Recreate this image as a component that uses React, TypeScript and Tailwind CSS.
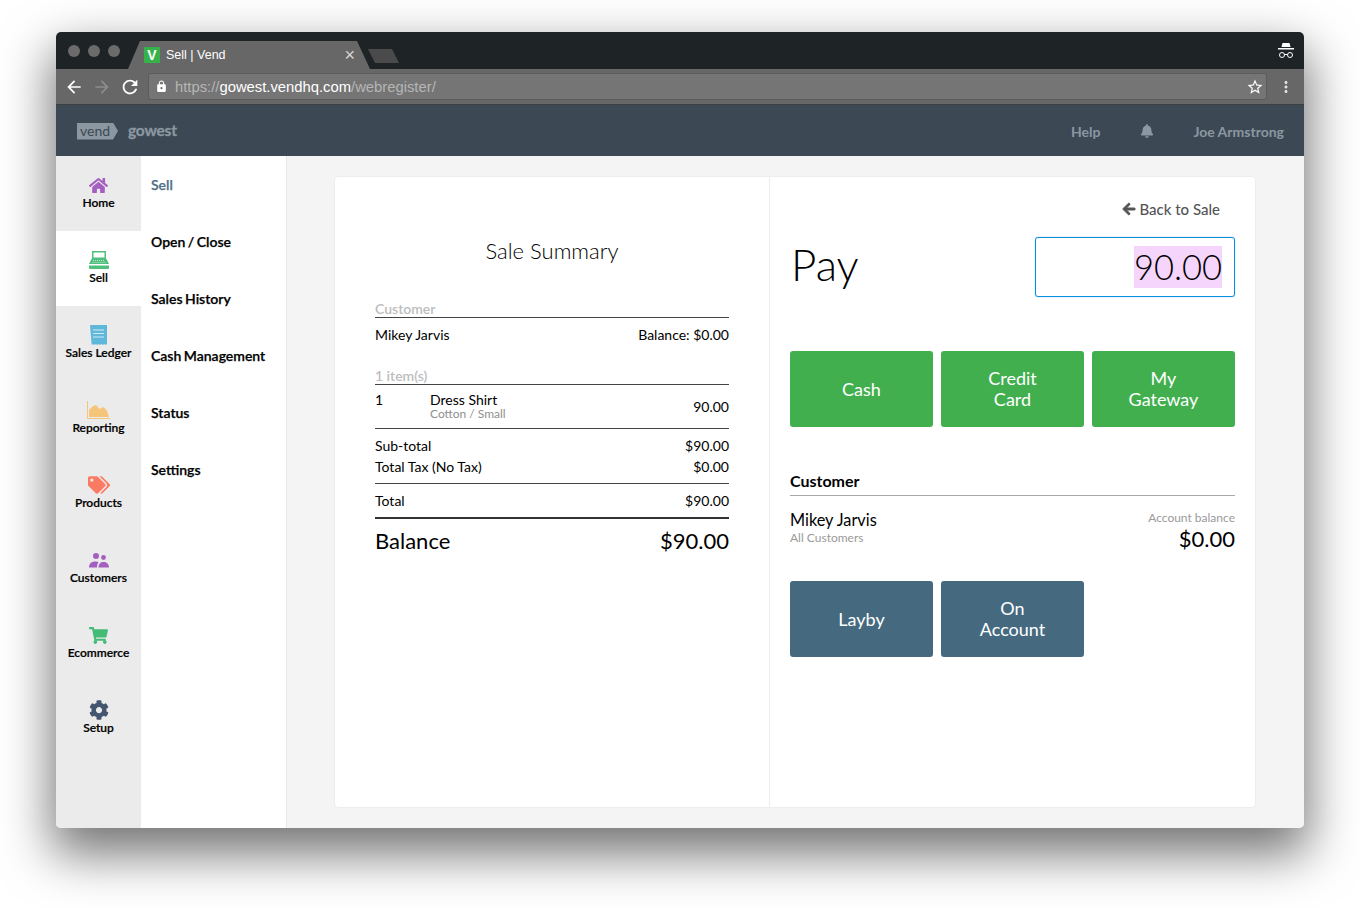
import { FaArrowLeft, FaBell, FaCog, FaHome, FaShoppingCart, FaTags } from "react-icons/fa";
import { MdArrowBack, MdArrowForward, MdLock, MdMoreVert, MdRefresh, MdStarBorder } from "react-icons/md";
import type { ReactNode } from "react";

function RegisterIcon() {
  return (
    <svg width="20" height="18" viewBox="0 0 20 18" fill="#4fbf7d">
      <path d="M3 0h14v8H3z M4.500 1.500v5h11v-5z" fillRule="evenodd" />
      <path d="M2.500 8h15L20 13H0z" />
      <path d="M4 9.500h12M3.500 11.500h13" stroke="#d5f0e0" strokeWidth="0.800" strokeDasharray="1 1" />
      <path d="M0 14.500h20V17a1 1 0 0 1-1 1H1a1 1 0 0 1-1-1z" />
    </svg>
  );
}

function ReceiptIcon() {
  return (
    <svg width="17" height="20" viewBox="0 0 17 20">
      <path d="M0 0h17v19l-1.400 1-1.400-1-1.400 1-1.400-1-1.400 1-1.400-1-1.400 1-1.400-1-1.400 1-1.400-1-1.300 1z" fill="#5fb8da" />
      <path d="M3 5h11M3 8.500h11M3 12h11" stroke="#cfeaf4" strokeWidth="1.200" />
    </svg>
  );
}

function ChartIcon() {
  return (
    <svg width="23" height="18" viewBox="0 0 23 18" fill="#f5c57a">
      <path d="M0 0h1v17h22v1H0z" />
      <path d="M2 16V9l4-4 3-1 3.500 4 4-2 3.500 3.500 2 6.500z" />
    </svg>
  );
}

function PeopleIcon() {
  return (
    <svg width="20" height="15" viewBox="0 0 20 15" fill="#a45fc0">
      <circle cx="7" cy="3" r="3" />
      <circle cx="14.500" cy="4.500" r="2.400" />
      <path d="M0 14.500c0-4 2.500-6 6.500-6 1.200 0 2.400.3 3 .7-1 1.300-1.500 3-1.500 5.300z" />
      <path d="M9.500 14.500c0-3.500 2-5.500 5-5.500s5.500 2 5.500 5.500z" />
    </svg>
  );
}

function IncognitoIcon() {
  return (
    <svg width="16" height="16" viewBox="0 0 16 16" fill="white">
      <path d="M4.500 0h7l1 4h-9z" />
      <path d="M0 5h16v1.400H0z" />
      <circle cx="4" cy="12" r="2.500" fill="none" stroke="white" strokeWidth="1" />
      <circle cx="12" cy="12" r="2.500" fill="none" stroke="white" strokeWidth="1" />
      <path d="M6.500 11.500h3" stroke="white" strokeWidth="1" />
    </svg>
  );
}

const railItems: { label: string; icon: ReactNode; active?: boolean }[] = [
  { label: "Home", icon: <FaHome className="size-[19px] text-[#a45fc0]" /> },
  { label: "Sell", icon: <RegisterIcon />, active: true },
  { label: "Sales Ledger", icon: <ReceiptIcon /> },
  { label: "Reporting", icon: <ChartIcon /> },
  { label: "Products", icon: <FaTags className="size-[22px] text-[#fb7a63]" /> },
  { label: "Customers", icon: <PeopleIcon /> },
  { label: "Ecommerce", icon: <FaShoppingCart className="size-[19px] text-[#45bb78]" /> },
  { label: "Setup", icon: <FaCog className="size-[20px] text-[#44566f]" /> },
];

const subItems = ["Sell", "Open / Close", "Sales History", "Cash Management", "Status", "Settings"];

function PayButton({ children, blue }: { children: ReactNode; blue?: boolean }) {
  return (
    <button
      type="button"
      className={`h-[76px] w-[143px] rounded-[3px] px-8 text-[18px] leading-[21px] text-white ${blue ? "bg-[#456a80]" : "bg-[#42af4f]"}`}
    >
      {children}
    </button>
  );
}

function SummaryRow({ left, right, className = "" }: { left: string; right: string; className?: string }) {
  return (
    <div className={`flex justify-between text-[14px] leading-[21px] text-black ${className}`}>
      <span>{left}</span>
      <span>{right}</span>
    </div>
  );
}

export default function App() {
  return (
    <div className="min-h-[908px] overflow-hidden bg-white pl-[56px] pt-[32px] font-['Lato',sans-serif]">
      <div className="h-[796px] w-[1248px] overflow-hidden rounded-[5px] shadow-[0_22px_50px_4px_rgba(0,0,0,0.55)]">
        {/* Browser tab strip */}
        <div className="flex h-[37px] items-end bg-[#1e2326] pl-[12px] pr-[10px]">
          <div className="flex h-[37px] items-center gap-2 self-start">
            <span className="size-[12px] rounded-full bg-[#6b6b6b]" />
            <span className="size-[12px] rounded-full bg-[#6b6b6b]" />
            <span className="size-[12px] rounded-full bg-[#6b6b6b]" />
          </div>
          <div className="ml-[8px] flex h-[28px] w-[242px] items-center bg-[#676767] pl-[16px] pr-[15px] [clip-path:polygon(12px_0,229px_0,242px_100%,0_100%)] font-['Liberation_Sans',sans-serif]">
            <span className="flex size-[16px] items-center justify-center rounded-[1px] bg-[#35b34a] text-[14px] font-bold text-white">V</span>
            <span className="ml-[6px] text-[12.5px] text-white">Sell | Vend</span>
            <span className="ml-auto text-[18px] leading-none text-[#d8d8d8]">×</span>
          </div>
          <div className="mb-[6px] ml-[-2px] h-[14px] w-[31px] bg-[#4a4a4a] [clip-path:polygon(0_0,24px_0,31px_100%,7px_100%)]" />
          <div className="ml-auto self-center">
            <IncognitoIcon />
          </div>
        </div>

        {/* Browser toolbar */}
        <div className="flex h-[36px] items-center border-b border-[#3f3f3f] bg-[#676767] pl-[8px] pr-[9px]">
          <MdArrowBack className="size-[20px] text-white" />
          <MdArrowForward className="ml-[8px] size-[20px] text-[#8d8d8d]" />
          <MdRefresh className="ml-[7px] size-[22px] text-white" />
          <div className="ml-[7px] flex h-[27px] w-[1119px] items-center rounded-[3px] bg-[#757575] pl-[7px] pr-[3px] shadow-[inset_0_0_0_1px_#5b5b5b] font-['Liberation_Sans',sans-serif] text-[14.8px]">
            <MdLock className="size-[13px] text-white" />
            <span className="ml-[7px] mt-[1px]">
              <span className="text-[#b5b5b5]">https://</span>
              <span className="text-white">gowest.vendhq.com</span>
              <span className="text-[#b5b5b5]">/webregister/</span>
            </span>
            <MdStarBorder className="ml-auto size-[18px] text-white" />
          </div>
          <MdMoreVert className="ml-auto size-[18px] text-[#e4e4e4]" />
        </div>

        {/* App header */}
        <div className="flex h-[51px] items-center bg-[#3c4955] pl-[21px] pr-[20px] pt-[1px] text-[14px] font-bold text-[#8b97a1]">
          <span className="flex h-[17px] w-[41px] items-center bg-[#8b97a1] pl-[3px] text-[14px] font-normal leading-none text-[#3c4955] [clip-path:polygon(0_0,36px_0,41px_50%,36px_100%,0_100%)]">
            vend
          </span>
          <span className="ml-[10px] text-[15.5px] tracking-[-0.2px] [-webkit-text-stroke:0.3px_#8b97a1]">gowest</span>
          <span className="ml-auto">Help</span>
          <FaBell className="ml-[40px] size-[14px]" />
          <span className="ml-[39px]">Joe Armstrong</span>
        </div>

        <div className="flex h-[672px] bg-[#f4f4f4]">
          {/* Main nav rail */}
          <nav className="w-[85px] shrink-0 bg-[#ebebeb]">
            {railItems.map((item) => (
              <div
                key={item.label}
                className={`flex h-[75px] flex-col items-center pt-[19px] text-[12px] font-semibold leading-[15px] text-black [-webkit-text-stroke:0.2px_#000] ${item.active ? "bg-white" : ""}`}
              >
                <span className="flex h-[20px] items-center justify-center">{item.icon}</span>
                <span>{item.label}</span>
              </div>
            ))}
          </nav>

          {/* Sub nav */}
          <nav className="w-[146px] shrink-0 border-r border-[#e8e8e8] bg-white pl-[10px] pt-[19px]">
            {subItems.map((item, i) => (
              <div
                key={item}
                className={`h-[57px] text-[14px] font-semibold leading-[20px] [word-spacing:-1px] [-webkit-text-stroke:0.25px] ${i === 0 ? "text-[#507088]" : "text-black"}`}
              >
                {item}
              </div>
            ))}
          </nav>

          {/* Payment card */}
          <main className="ml-[47px] mt-[20px] flex h-[632px] w-[922px] rounded-[5px] border border-[#ededed] bg-white">
            <section className="w-[435px] border-r border-[#ededed] px-[40px] pt-[60px]">
              <h2 className="text-center text-[22px] font-light leading-[28px] text-black">Sale Summary</h2>

              <div className="mt-[35px] border-b border-[#444] text-[14px] font-semibold leading-[17px] text-[#bdbdbd]">Customer</div>
              <SummaryRow left="Mikey Jarvis" right="Balance: $0.00" className="mt-[6px]" />

              <div className="mt-[22px] border-b border-[#444] text-[14px] font-semibold leading-[17px] text-[#bdbdbd]">1 item(s)</div>
              <div className="flex h-[44px] items-center border-b border-[#444] text-[14px] text-black">
                <span className="w-[55px] self-start pt-[5px] leading-[20px]">1</span>
                <div className="pb-[1px]">
                  <div className="leading-[15px]">Dress Shirt</div>
                  <div className="text-[12px] leading-[14px] text-[#8f8f8f]">Cotton / Small</div>
                </div>
                <span className="ml-auto">90.00</span>
              </div>

              <div className="border-b border-[#444] py-[6px]">
                <SummaryRow left="Sub-total" right="$90.00" />
                <SummaryRow left="Total Tax (No Tax)" right="$0.00" />
              </div>
              <SummaryRow left="Total" right="$90.00" className="border-b-2 border-[#333] py-[6px]" />
              <div className="mt-[7px] flex justify-between text-[22px] leading-[30px] text-black">
                <span>Balance</span>
                <span>$90.00</span>
              </div>
            </section>

            <section className="flex-1 px-[20px] pt-[23px]">
              <div className="flex items-center justify-end gap-[3px] pr-[15px] text-[15px] font-medium leading-[18px] text-[#555]">
                <FaArrowLeft className="size-[14px]" stroke="currentColor" strokeWidth={30} />
                <span>Back to Sale</span>
              </div>
              <div className="mt-[19px] flex items-center justify-between">
                <span className="pb-[6px] pl-[1px] text-[44px] font-light leading-[54px] text-black">Pay</span>
                <div className="flex h-[60px] w-[200px] items-center justify-end rounded-[3px] border border-[#0a8fe0] pr-[12px] shadow-[0_0_1px_#0a8fe0]">
                  <span className="bg-[#f5d5fb] text-[34.5px] font-light leading-[42px] text-black">90.00</span>
                </div>
              </div>

              <div className="mt-[54px] flex gap-[8px]">
                <PayButton>Cash</PayButton>
                <PayButton>Credit Card</PayButton>
                <PayButton>My Gateway</PayButton>
              </div>

              <h3 className="mt-[44px] border-b border-[#aaa] pb-[4px] text-[16px] font-bold leading-[20px] text-black">Customer</h3>
              <div className="mt-[14px] flex justify-between">
                <div>
                  <div className="text-[16.3px] leading-[20px] text-black">Mikey Jarvis</div>
                  <div className="text-[12px] leading-[16px] text-[#9a9a9a]">All Customers</div>
                </div>
                <div className="text-right">
                  <div className="text-[12px] leading-[16px] text-[#9a9a9a]">Account balance</div>
                  <div className="text-[22px] leading-[26px] text-black">$0.00</div>
                </div>
              </div>

              <div className="mt-[29px] flex gap-[8px]">
                <PayButton blue>Layby</PayButton>
                <PayButton blue>On Account</PayButton>
              </div>
            </section>
          </main>
        </div>
      </div>
    </div>
  );
}
